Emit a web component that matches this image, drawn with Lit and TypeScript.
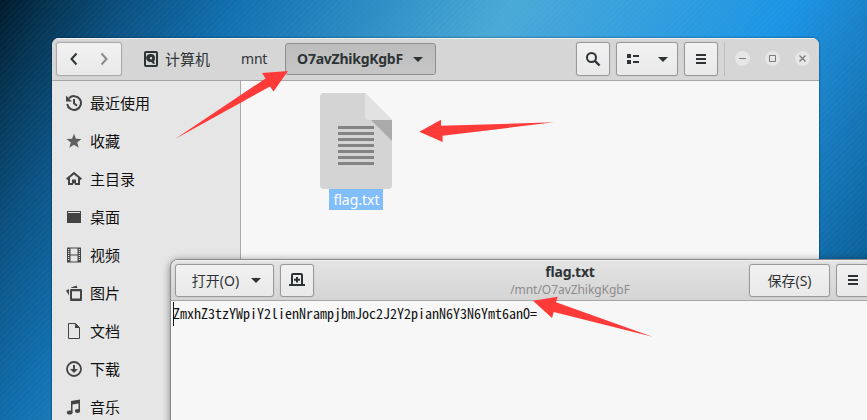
import { LitElement, html, css, svg } from "lit";
import { customElement } from "lit/decorators.js";

const menuIcon = svg`<path d="M3 3h10v2H3zM3 7h10v2H3zM3 11h10v2H3z"/>`;

const places = [
  { name: "最近使用", icon: svg`<g fill="none" stroke="#444" stroke-width="2"><path d="M3 3.300A6.900 6.900 0 1 1 1.200 9"/><path d="M8 4v4.300l3 2.500"/></g><path d="M0 .5v6h6z"/>` },
  { name: "收藏", icon: svg`<path fill="#5f5f5f" d="M8 .7l2 5.100 5.500.3-4.300 3.400 1.500 5.300L8 11.800l-4.700 3 1.500-5.300L.5 6.100 6 5.800z"/>` },
  { name: "主目录", icon: svg`<path d="M8 .8L0 7.400l1.200 1.500L8 3.400l6.800 5.500L16 7.400z"/><path d="M2 7v7h5v-4h2v4h5V7h-2v5H4V7z"/><path d="M6 9h1.500v4H6zM8.500 9H10v4H8.500zM6 8.500h4v1.500H6z"/>` },
  { name: "桌面", icon: svg`<path d="M1 2h14v1H1zM1 4h14v9.500a.5.5 0 0 1-.5.5h-13a.5.5 0 0 1-.5-.5zM1 2h1v3H1zM14 2h1v3h-1z"/>` },
  { name: "视频", icon: svg`<path fill-rule="evenodd" d="M1 .5h14v15H1zM4.500 1.500v6h7v-6zm0 7v6h7v-6zM2 2v1h1.300V2zm0 2v1h1.300V4zm0 2v1h1.300V6zm0 2v1h1.300V8zm0 2v1h1.300v-1zm0 2v1h1.300v-1zM12.700 2v1H14V2zm0 2v1H14V4zm0 2v1H14V6zm0 2v1H14V8zm0 2v1H14v-1zm0 2v1H14v-1z"/>` },
  { name: "图片", icon: svg`<path fill-rule="evenodd" d="M5 4h10q1 0 1 1v10q0 1-1 1H5q-1 0-1-1V5q0-1 1-1zm1 2.200v7.300h8V6.200z"/><path d="M0 5.500L3 4v6.500zM5 2.500L10.500.5l1 2.500H5z"/>` },
  { name: "文档", icon: svg`<path fill="none" stroke="#444" d="M2.500.5h7l4 4v11h-11z"/><path d="M9 .5v4.500h5z"/>` },
  { name: "下载", icon: svg`<circle cx="8" cy="8" r="7" fill="none" stroke="#444" stroke-width="1.800"/><path d="M7 4h2v4h3l-4 4-4-4h3z"/>` },
  { name: "音乐", icon: svg`<path d="M5 2l9-1.500V12h-1.500V4.500L6.500 5.500V14H5z"/><ellipse cx="3.700" cy="13.500" rx="2.800" ry="2"/><ellipse cx="11.500" cy="12" rx="2.700" ry="2"/>` },
];

@customElement("app-root")
export class AppRoot extends LitElement {
  static styles = css`
    :host {
      display: block;
      position: relative;
      width: 867px;
      height: 420px;
      overflow: hidden;
      font: 15px "Noto Sans", "Noto Sans CJK SC", sans-serif;
      color: #2e3436;
      background:
        repeating-linear-gradient(135deg, rgba(255, 255, 255, 0.018) 0 2px, transparent 2px 4.200px),
        linear-gradient(118deg, #001a2c 0%, #053554 5%, #0b5283 12%, #1170b0 22%, #4aa9d7 47%, #1b94e4 73%, #1a82c8 80%, #0b619a 92%);
    }
    * { box-sizing: border-box; }
    svg { display: block; flex: none; }
    .icon { width: 16px; height: 16px; fill: #2e3436; }
    .window { position: absolute; display: flex; flex-direction: column; border-radius: 7px 7px 0 0; background: #f7f7f7; overflow: hidden; }
    .files { left: 52px; top: 38px; width: 767px; height: 400px; box-shadow: 0 0 2px rgba(0, 20, 40, 0.8); }
    .editor { left: 171px; top: 260px; width: 750px; height: 200px; box-shadow: 0 0 0 1px #8b8b8b, 0 1px 9px rgba(0, 0, 0, 0.55); }
    .bar { display: flex; flex: none; align-items: center; border-bottom: 1px solid #a6a6a6; box-shadow: inset 0 1px #f1f1f1; }
    .files .bar { height: 43px; padding: 0 8px 1px 4px; background: #d6d6d6; }
    .editor .bar { height: 41px; padding: 0 4px; background: linear-gradient(#e4e4e4, #d4d4d4); }
    .btn { display: flex; align-items: center; justify-content: center; height: 34px; border: 1px solid #999; border-radius: 3px; background: linear-gradient(#f1f1f1, #e9e9e9); box-shadow: 0 0 1px #999; flex: none; }
    .editor .btn { height: 33px; }
    .square { width: 34px; }
    .nav { width: 66px; justify-content: space-around; padding: 0 2px; border-color: #aaa; }
    .disk { margin-left: 21px; }
    .computer { margin-left: 6px; width: 44px; white-space: nowrap; }
    .mnt { margin-left: 32px; width: 26px; font-size: 14px; letter-spacing: -0.200px; }
    .current { margin-left: 18px; width: 151px; height: 32px; gap: 7px; padding-left: 2px; font-weight: 700; font-size: 14px; letter-spacing: -0.250px; background: linear-gradient(#bcbcbc, #c6c6c6); border-color: #8f8f8f; box-shadow: none; }
    .spacer { flex: 1; }
    .view { width: 62px; margin: 0 6px; padding-left: 1px; gap: 14px; }
    .rule { width: 1px; height: 34px; margin: 0 10px 0 6px; background: #bdbdbd; }
    .controls { display: flex; gap: 15px; padding-right: 1px; }
    .controls svg { width: 15px; height: 15px; fill: none; stroke: #7c7c7c; }
    .content { display: flex; flex: 1; }
    .places { display: flex; flex-direction: column; width: 189px; padding-top: 3px; background: #e6e6e6; border-right: 1px solid #aaa; color: #111; }
    .place { display: flex; align-items: center; gap: 8px; height: 38px; padding-left: 14px; flex: none; }
    .place span { padding-bottom: 2px; }
    .place .icon { fill: #444; }
    .file { display: flex; flex-direction: column; align-items: center; width: 72px; margin: 12px 0 0 79px; }
    .label { height: 21px; width: 54px; padding-left: 1px; background: #82bdfc; color: #fff; font-size: 14px; line-height: 21px; text-align: center; }
    .open { width: 99px; gap: 9px; padding-left: 7px; margin-right: 6px; font-size: 14px; }
    .save { width: 81px; margin-right: 6px; font-size: 14px; }
    .heading { display: flex; flex-direction: column; align-items: center; width: 120px; margin: 0 119px 0 0; line-height: 17px; }
    .name { font-size: 14px; font-weight: 700; line-height: 18px; letter-spacing: -0.200px; }
    .path { font-size: 12px; color: #8d8d8d; letter-spacing: -0.050px; }
    .text { display: flex; align-items: center; height: 26px; color: #111; }
    .caret { width: 1px; height: 24px; margin-left: 2px; background: #111; }
    .mono { margin-left: -1px; padding-bottom: 2px; font: 14px "Noto Sans Mono CJK SC", "DejaVu Sans Mono", monospace; white-space: pre; }
    .arrows { position: absolute; left: 0; top: 0; fill: #ff3b3a; }
  `;

  private icon(shape: unknown) {
    return html`<svg class="icon" viewBox="0 0 16 16">${shape}</svg>`;
  }

  private caret() {
    return html`<svg class="icon" viewBox="0 0 16 16"><path d="M3 6h10l-5 5z" /></svg>`;
  }

  render() {
    return html`
      <section class="window files">
        <header class="bar">
          <div class="btn nav">
            ${this.icon(svg`<path d="M10.500 2.500L5.500 8l5 5.500" fill="none" stroke="#2e3436" stroke-width="2"/>`)}
            ${this.icon(svg`<path d="M5.500 2.500l5 5.500-5 5.500" fill="none" stroke="#8a8a8a" stroke-width="2"/>`)}
          </div>
          <div class="disk">${this.icon(svg`<path fill-rule="evenodd" d="M3 0h10q2 0 2 2v12q0 2-2 2H3q-2 0-2-2V2q0-2 2-2zm0 2v12h10V2z"/><path fill-rule="evenodd" d="M8 3a4 4 0 0 1 4 4c0 2-.7 3-1 3.500l1 2-1.500.5L8 10.800A4 4 0 1 1 8 3zm0 3a1.200 1.200 0 1 0 .1 2.400A1.200 1.200 0 0 0 8 6z"/>`)}</div>
          <span class="computer">计算机</span>
          <span class="mnt">mnt</span>
          <div class="btn current"><span>O7avZhikgKgbF</span>${this.caret()}</div>
          <span class="spacer"></span>
          <div class="btn square">${this.icon(svg`<g fill="none" stroke="#2e3436"><circle cx="6.500" cy="6.500" r="4.500" stroke-width="2"/><path d="M10 10l4.500 4.500" stroke-width="2.400"/></g>`)}</div>
          <div class="btn view">${this.icon(svg`<path d="M2 3h4v4H2zM2 9h4v4H2zM8 4h6v2H8zM8 10h6v2H8z"/>`)}${this.caret()}</div>
          <div class="btn square">${this.icon(menuIcon)}</div>
          <span class="rule"></span>
          <div class="controls">
            <svg viewBox="0 0 15 15"><circle cx="7.500" cy="7.500" r="7.500" fill="#e6e6e6" stroke="none"/><path d="M4 7.500h7"/></svg>
            <svg viewBox="0 0 15 15"><circle cx="7.500" cy="7.500" r="7.500" fill="#e6e6e6" stroke="none"/><path d="M4.500 4.500h6v6h-6z"/></svg>
            <svg viewBox="0 0 15 15"><circle cx="7.500" cy="7.500" r="7.500" fill="#e6e6e6" stroke="none"/><path d="M4.500 4.500l6 6M10.500 4.500l-6 6" stroke-width="1.300"/></svg>
          </div>
        </header>
        <div class="content">
          <nav class="places">
            ${places.map((p) => html`<div class="place">${this.icon(p.icon)}<span>${p.name}</span></div>`)}
          </nav>
          <div class="file">
            <svg width="72" height="96" viewBox="0 0 72 96">
              <path fill="#d4d4d4" d="M4 0h41l27 27v65q0 4-4 4H4q-4 0-4-4V4q0-4 4-4z"/>
              <path fill="#aaa" d="M51 27h21v21z"/>
              <path fill="#e2e2e2" d="M45 0l27 27H49q-4 0-4-4z"/>
              <path fill="#848484" d="M18 33h36v3H18zM18 39h36v3H18zM18 45h36v3H18zM18 51h36v3H18zM18 57h36v3H18zM18 63h36v3H18zM18 69h36v3H18z"/>
            </svg>
            <span class="label">flag.txt</span>
          </div>
        </div>
      </section>
      <section class="window editor">
        <header class="bar">
          <div class="btn open"><span>打开(O)</span>${this.caret()}</div>
          <div class="btn square">${this.icon(svg`<path fill-rule="evenodd" d="M4 1h8q2 0 2 2v9h2v2H0v-2h2V3q0-2 2-2zm0 2v9h8V3z"/><path d="M7 5h2v1.800h2v2H9v1.800H7V8.800H5v-2h2z"/>`)}</div>
          <span class="spacer"></span>
          <div class="heading"><span class="name">flag.txt</span><span class="path">/mnt/O7avZhikgKgbF</span></div>
          <div class="btn save">保存(S)</div>
          <div class="btn square">${this.icon(menuIcon)}</div>
          <svg width="47" height="16"></svg>
        </header>
        <div class="text"><span class="caret"></span><span class="mono">ZmxhZ3tzYWpiY2lienNrampjbmJoc2J2Y2pianN6Y3N6Ymt6anO=</span></div>
      </section>
      <svg class="arrows" width="867" height="420">
        <path d="M288 71L262 73l3.500 5.500L175 139l95-52.500 3.500 5z"/>
        <path d="M419.300 131.700L441 119.800v6L554 122.300l-111.500 13.500.2 6.200z"/>
        <path d="M533 300.700l24.700-4-1.700 5.500 96.500 34.600L553.700 312l-1.700 6z"/>
      </svg>
    `;
  }
}
